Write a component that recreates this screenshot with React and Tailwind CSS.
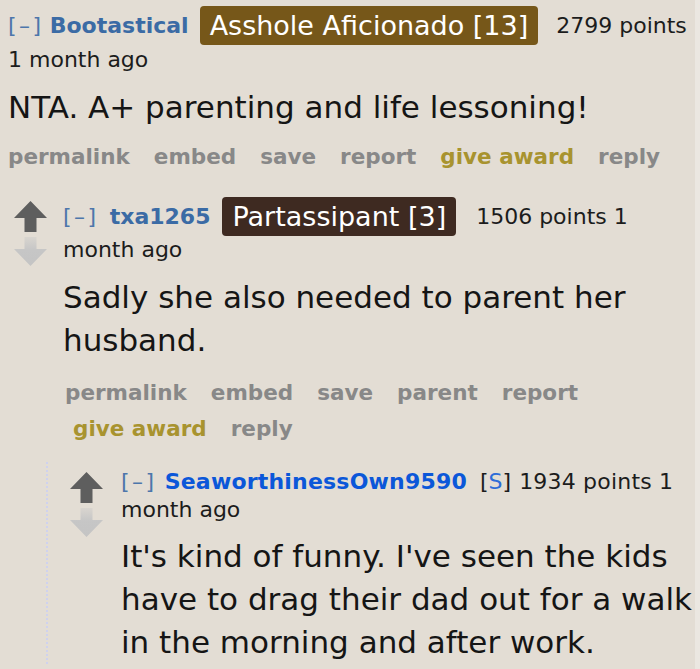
import React from "react";

const UpArrow = () => (
  <svg width="33" height="31" viewBox="0 0 33 31" className="block">
    <polygon points="16.5,0 33,17 22.5,17 22.5,31 10.5,31 10.5,17 0,17" fill="#5e5e5e" />
  </svg>
);

const DownArrow = () => (
  <svg width="33" height="29" viewBox="0 0 33 29" className="block">
    <defs>
      <linearGradient id="dstem" x1="0" y1="0" x2="0" y2="1">
        <stop offset="0" stopColor="#c6c6c6" stopOpacity="0.35" />
        <stop offset="0.45" stopColor="#c6c6c6" />
        <stop offset="1" stopColor="#c4c4c4" />
      </linearGradient>
    </defs>
    <polygon points="10.5,0 22.5,0 22.5,12 33,12 16.5,29 0,12 10.5,12" fill="url(#dstem)" />
  </svg>
);

const Votes = ({ top }) => (
  <div className={`flex flex-col w-[33px] shrink-0 ${top}`}>
    <UpArrow />
    <div className="mt-[5px]">
      <DownArrow />
    </div>
  </div>
);

const Expand = () => (
  <span className="text-[#4d76ab] tracking-[2.5px]">[–]</span>
);

const Flair = ({ text, bg, ml }) => (
  <span
    className={`${ml} ${bg} inline-block rounded-[4px] px-[10px] text-white text-[27px] leading-[39px]`}
  >
    {text}
  </span>
);

const Buttons = ({ rows }) => (
  <div className="text-[21.5px] font-bold leading-[36px] text-[#888888]">
    {rows.map((row, i) => (
      <div key={i} className={`flex gap-x-[24px] whitespace-nowrap ${i > 0 ? "pl-[8px]" : ""}`}>
        {row.map((b) => (
          <span key={b} className={b === "give award" ? "text-[#a8932f]" : ""}>
            {b}
          </span>
        ))}
      </div>
    ))}
  </div>
);

export default function App() {
  return (
    <div className="min-h-screen flex bg-[#e3ddd4] font-['DejaVu_Sans',sans-serif] text-[#1c1c1c]">
      <div className="flex-1 pt-[6px] pl-[8px]">
        {/* top comment */}
        <div>
          <div className="flex items-center h-[39px] whitespace-nowrap text-[22px] leading-[28px]">
            <Expand />
            <span className="ml-[6px] font-bold text-[#3b6ba5]">Bootastical</span>
            <Flair text="Asshole Aficionado [13]" bg="bg-[#765719]" ml="ml-[11px]" />
            <span className="ml-[18px]">2799 points</span>
          </div>
          <div className="mt-[1px] text-[22px] leading-[28px]">1 month ago</div>
          <div className="mt-[12px] text-[31px] leading-[43px] text-[#151515]">
            NTA. A+ parenting and life lessoning!
          </div>
          <div className="mt-[10px]">
            <Buttons rows={[["permalink", "embed", "save", "report", "give award", "reply"]]} />
          </div>
        </div>

        {/* reply */}
        <div className="mt-[22px]">
          <div className="flex">
            <div className="ml-[6px]">
              <Votes top="pt-[4px]" />
            </div>
            <div className="ml-[16px] flex-1">
              <div className="flex items-center h-[39px] whitespace-nowrap text-[22px] leading-[28px]">
                <Expand />
                <span className="ml-[11px] font-bold text-[#3b6ba5]">txa1265</span>
                <Flair text="Partassipant [3]" bg="bg-[#3e2a21]" ml="ml-[12px]" />
                <span className="ml-[20px]">1506 points 1</span>
              </div>
              <div className="text-[22px] leading-[28px]">month ago</div>
              <div className="mt-[12px] text-[31px] leading-[43px] text-[#151515] whitespace-nowrap">
                Sadly she also needed to parent her
                <br />
                husband.
              </div>
              <div className="mt-[13px] pl-[2px]">
                <Buttons
                  rows={[
                    ["permalink", "embed", "save", "parent", "report"],
                    ["give award", "reply"],
                  ]}
                />
              </div>
            </div>
          </div>

          {/* child reply */}
          <div className="mt-[15px] ml-[38px] border-l-2 border-dotted border-[#cfd2ee] pt-[6px]">
            <div className="flex">
              <div className="ml-[22px]">
                <Votes top="pt-[4px]" />
              </div>
              <div className="ml-[18px] flex-1">
                <div className="whitespace-nowrap text-[22px] leading-[28px]">
                  <Expand />
                  <span className="ml-[8px] font-bold text-[#0b57d9] tracking-[0.2px]">SeaworthinessOwn9590</span>
                  <span className="ml-[13px]">
                    [<span className="text-[#2d6cd8]">S</span>]
                  </span>
                  <span className="ml-[8px] tracking-[0.2px]">1934 points 1</span>
                </div>
                <div className="text-[22px] leading-[28px]">month ago</div>
                <div className="mt-[11px] text-[31px] leading-[43px] text-[#151515] whitespace-nowrap">
                  It's kind of funny. I've seen the kids
                  <br />
                  have to drag their dad out for a walk
                  <br />
                  in the morning and after work.
                </div>
              </div>
            </div>
          </div>
        </div>
      </div>
      <div className="w-[5px] shrink-0 bg-[#ebe7e1]" />
    </div>
  );
}
